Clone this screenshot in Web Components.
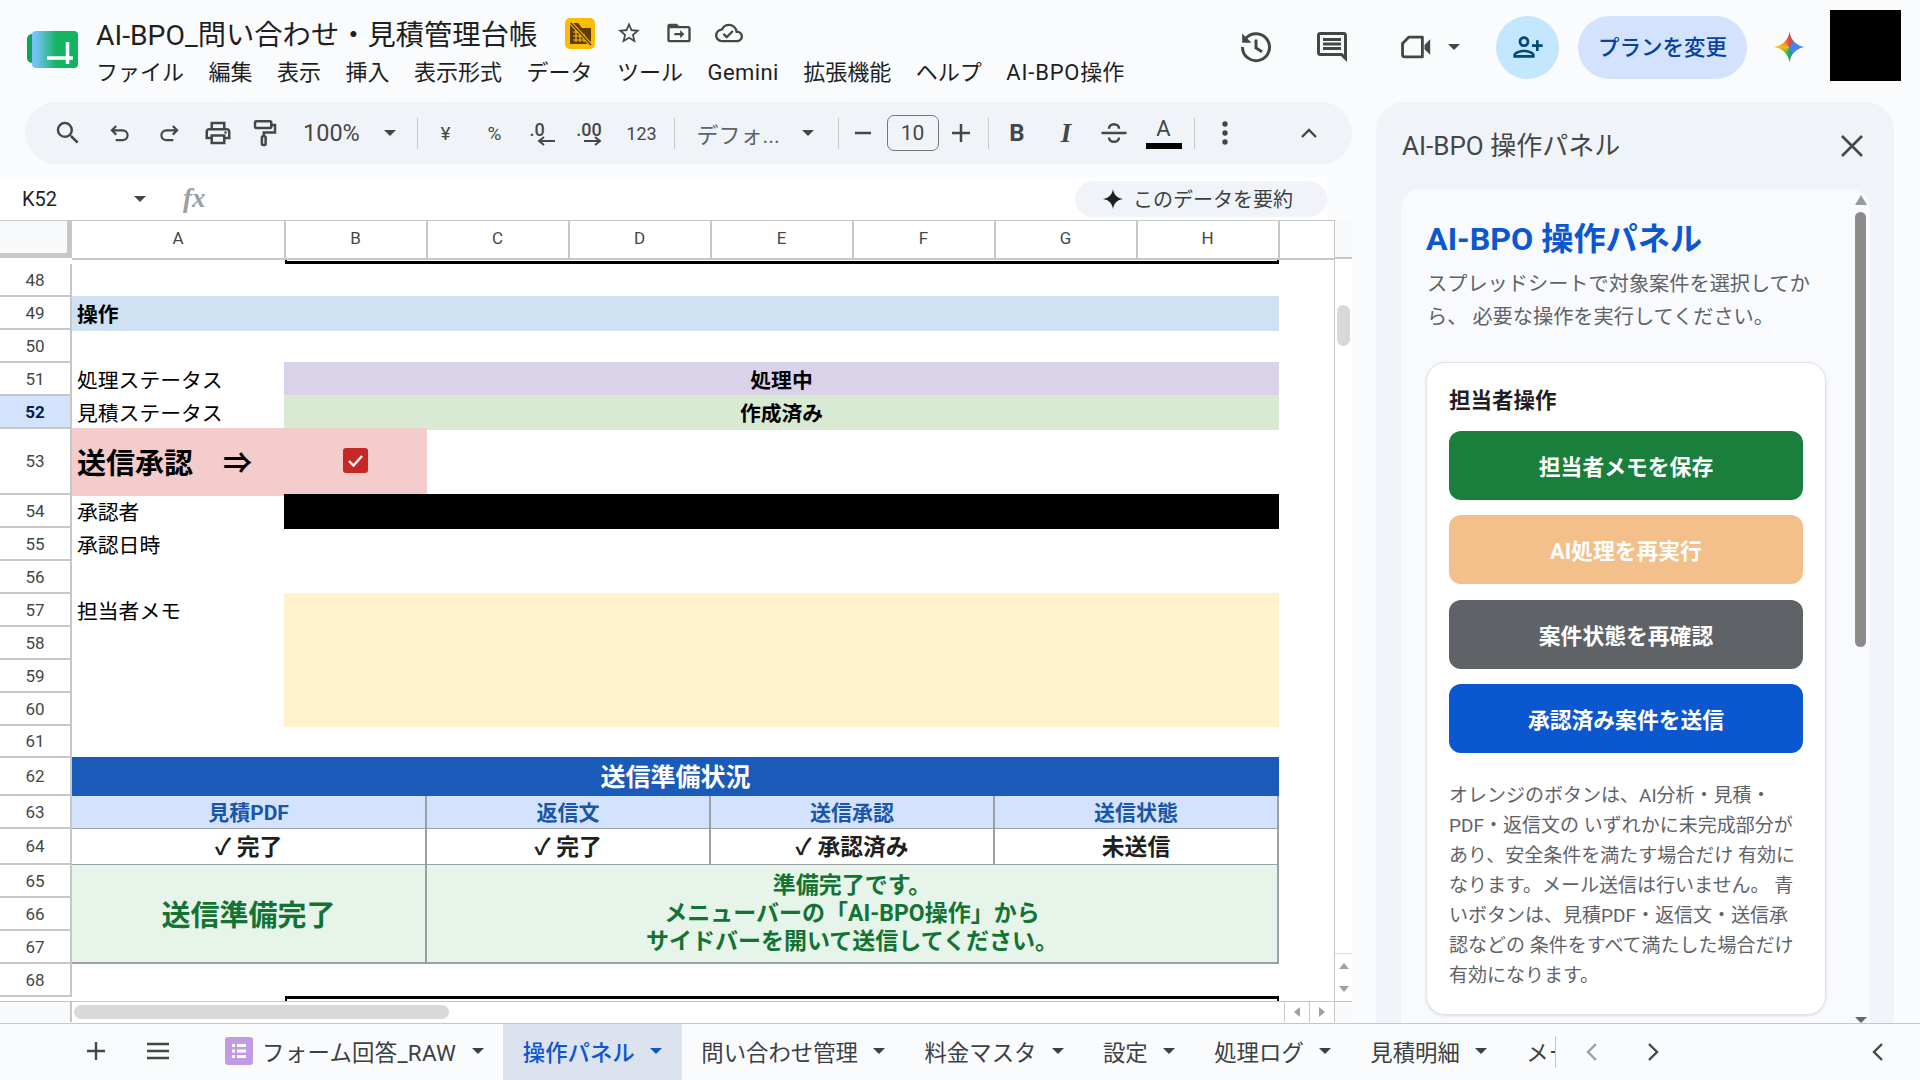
<!DOCTYPE html>
<html lang="ja">
<head>
<meta charset="utf-8">
<title>AI-BPO</title>
<style>
html, body { margin: 0; padding: 0; background: #f9fbfd; overflow: hidden; }
</style>
</head>
<body>
<sheets-app></sheets-app>

<script>
const FONT = 'Roboto, "Noto Sans CJK JP", sans-serif'

customElements.define('drop-arrow', class extends HTMLElement {
  constructor () {
    super()
    this.attachShadow({ mode: 'open' }).innerHTML = `
<style>
:host { display: inline-block; width: 0; height: 0; flex: none;
  border-left: 6px solid transparent; border-right: 6px solid transparent; border-top: 6px solid currentColor; }
</style>`
  }
})

customElements.define('doc-header', class extends HTMLElement {
  constructor () {
    super()
    this.attachShadow({ mode: 'open' }).innerHTML = `
<style>
:host { display: flex; height: 102px; box-sizing: border-box; padding: 0 19px 8px 27px; align-items: center; color: #1f1f1f; font-family: ${FONT}; }
.logo { width: 52px; height: 38px; flex: none; margin-top: 6px; }
.col { margin-left: 17px; margin-top: 10px; }
.row1 { display: flex; height: 37px; align-items: center; }
.title { font-size: 28.300px; white-space: nowrap; width: 442px; margin-top: -1px; }
.badge { width: 30px; height: 31px; margin-left: 27px; background: #fbbc04; border-radius: 5px; display: flex; }
.ic { width: 50px; display: flex; justify-content: center; }
.menu { display: flex; gap: 24.500px; height: 38px; box-sizing: border-box; padding-top: 4px; align-items: baseline; line-height: 34px; font-size: 22px; white-space: nowrap; }
.right { margin-left: auto; display: flex; align-items: center; color: #444746; }
.share { width: 63px; height: 63px; border-radius: 50%; background: #c2e7ff; margin-left: 35px; display: flex; align-items: center; justify-content: center; }
.plan { width: 169px; height: 63px; box-sizing: border-box; padding-bottom: 3px; border-radius: 32px; background: #d3e3fd; margin-left: 19px; color: #0842a0; font-size: 21.500px; font-weight: 500; display: flex; align-items: center; justify-content: center; white-space: nowrap; }
.gem { width: 31px; height: 31px; margin-left: 27px; background: conic-gradient(from 0deg, #ea4335 0deg, #4285f4 50deg, #4285f4 140deg, #1ea362 180deg, #7cb93c 225deg, #fbbc04 275deg, #f28b3c 310deg, #ea4335 360deg); clip-path: path('M15.500 0C16.500 8.400 22.600 14.500 31 15.500C22.600 16.500 16.500 22.600 15.500 31C14.500 22.600 8.400 16.500 0 15.500C8.400 14.500 14.500 8.400 15.500 0Z'); }
.avatar { width: 71px; height: 71px; margin-left: 25px; background: #000; margin-top: -3px; }
</style>
<svg class="logo" viewBox="0 0 52 38">
  <defs><linearGradient id="lg" x1="0" x2="1" y1="0" y2="0"><stop offset="0.08" stop-color="#74c2f5"/><stop offset="0.55" stop-color="#13b45f"/></linearGradient></defs>
  <rect x="0" y="3" width="14" height="29" rx="5" fill="#0aa556"/>
  <rect x="5" y="0" width="46" height="37" rx="4" fill="url(#lg)"/>
  <path d="M20 27H46M40.500 11V33" stroke="#fff" stroke-width="3.500" fill="none"/>
</svg>
<div class="col">
  <div class="row1">
    <div class="title">AI-BPO_問い合わせ・見積管理台帳</div>
    <div class="badge"><svg width="30" height="31" viewBox="0 0 30 31"><path d="M5 5H13L17 10H26V26H5z" fill="#5f3b00"/><path d="M8 14h8M8 18h11M8 22h14M11 11v13M15 13v11M19 16v8" stroke="#fbbc04" stroke-width="1.200"/><path d="M6 5L26 27" stroke="#fbbc04" stroke-width="3.500"/><path d="M6 5L26 27" stroke="#5f3b00" stroke-width="1.600"/></svg></div>
    <div class="ic" style="margin-left:9px"><svg width="26" height="26" viewBox="0 0 24 24" fill="#444746"><path d="M22 9.240l-7.190-.62L12 2 9.190 8.630 2 9.240l5.460 4.730L5.820 21 12 17.270 18.180 21l-1.630-7.030L22 9.240zM12 15.400l-3.760 2.270 1-4.280-3.320-2.880 4.380-.38L12 6.100l1.710 4.040 4.380.38-3.320 2.880 1 4.280L12 15.400z"/></svg></div>
    <div class="ic"><svg width="28" height="28" viewBox="0 0 24 24" fill="#444746"><path d="M20 6h-8l-2-2H4c-1.100 0-2 .9-2 2v12c0 1.100.9 2 2 2h16c1.100 0 2-.9 2-2V8c0-1.100-.9-2-2-2zm0 12H4V8h16v10z"/><path d="M13 9.500l3.500 3.500-3.500 3.500v-2.500H8v-2h5z"/></svg></div>
    <div class="ic"><svg width="28" height="28" viewBox="0 0 24 24" fill="#444746"><path d="M19.350 10.040A7.490 7.490 0 0 0 12 4C9.110 4 6.600 5.640 5.350 8.040A5.994 5.994 0 0 0 0 14c0 3.310 2.690 6 6 6h13c2.760 0 5-2.240 5-5 0-2.640-2.050-4.780-4.650-4.960zM19 18H6c-2.210 0-4-1.790-4-4 0-2.050 1.530-3.760 3.560-3.970l1.070-.11.5-.95A5.469 5.469 0 0 1 12 6c2.620 0 4.880 1.860 5.390 4.430l.3 1.500 1.530.11A2.980 2.980 0 0 1 22 15c0 1.650-1.350 3-3 3zm-9-3.820l-2.090-2.090L6.500 13.500 10 17l6.010-6.010-1.410-1.410z"/></svg></div>
  </div>
  <div class="menu"><span>ファイル</span><span>編集</span><span>表示</span><span>挿入</span><span>表示形式</span><span>データ</span><span>ツール</span><span style="letter-spacing:.4px">Gemini</span><span>拡張機能</span><span>ヘルプ</span><span><span style="letter-spacing:.8px">AI-BPO</span>操作</span></div>
</div>
<div class="right">
  <svg width="36" height="36" viewBox="0 0 24 24" fill="none" stroke="#444746" stroke-width="2" style="margin-right:-2px"><path d="M5.200 6.200A9 9 0 1 1 3 12"/><path d="M2.800 3V9.200H9z" fill="#444746" stroke="none"/><path d="M12 7v5.600l4 2.600"/></svg>
  <svg style="margin-left:42px;margin-right:-2px" width="36" height="36" viewBox="0 0 24 24" fill="#444746"><path d="M21.990 4c0-1.100-.89-2-1.990-2H4c-1.100 0-2 .9-2 2v12c0 1.100.9 2 2 2h14l4 4-.01-18zM20 4v13.170L18.830 16H4V4h16zM6 12h12v2H6zm0-3h12v2H6zm0-3h12v2H6z"/></svg>
  <svg style="margin-left:51px" width="34" height="34" viewBox="0 0 24 24" fill="none" stroke="#444746" stroke-width="2" stroke-linejoin="round"><path d="M7 5H16.500V19H4a1.500 1.500 0 0 1-1.500-1.500V9.500z"/><path d="M18 10.500L22 6.500V17.500L18 13.500z" fill="#444746" stroke="none"/></svg>
  <drop-arrow style="margin-left:15px"></drop-arrow>
  <div class="share" style="margin-left:36px"><svg width="32" height="32" viewBox="0 0 24 24" fill="#004a77" style="transform:scaleX(-1)"><path d="M15 12c2.210 0 4-1.790 4-4s-1.790-4-4-4-4 1.790-4 4 1.790 4 4 4zm0-6c1.100 0 2 .9 2 2s-.9 2-2 2-2-.9-2-2 .9-2 2-2zm0 8c-2.670 0-8 1.340-8 4v2h16v-2c0-2.660-5.330-4-8-4zm-6 4c.22-.72 3.310-2 6-2 2.700 0 5.800 1.290 6 2H9zm-3-3v-3h3v-2H6V7H4v3H1v2h3v3h2z"/></svg></div>
  <div class="plan">プランを変更</div>
  <div class="gem"></div>
  <div class="avatar"></div>
</div>`
  }
})

customElements.define('sheet-toolbar', class extends HTMLElement {
  constructor () {
    super()
    this.attachShadow({ mode: 'open' }).innerHTML = `
<style>
:host { display: flex; align-items: center; height: 62px; width: 1327px; margin-left: 25px; box-sizing: border-box; padding-left: 18px; background: #f0f4f9; border-radius: 31px; color: #444746; font-family: ${FONT}; font-size: 19px; white-space: nowrap; }
.b { width: 49px; height: 40px; display: flex; align-items: center; justify-content: center; flex: none; }
.d { width: 1px; height: 31px; background: #c7c7c7; flex: none; }
.sm { font-size: 18px; }
.st { display: flex; flex-direction: column; align-items: center; line-height: 20px; font-size: 18px; font-weight: 500; }
</style>
<div class="b"><svg width="30" height="30" viewBox="0 0 24 24" fill="#444746"><path d="M15.500 14h-.79l-.28-.27A6.470 6.470 0 0 0 16 9.500 6.500 6.500 0 1 0 9.500 16c1.610 0 3.090-.59 4.230-1.570l.27.28v.79l5 4.990L20.490 19l-4.990-5zm-6 0C7.010 14 5 11.990 5 9.500S7.010 5 9.500 5 14 7.010 14 9.500 11.990 14 9.500 14z"/></svg></div>
<div class="b" style="margin-left:3px"><svg width="26" height="26" viewBox="0 0 24 24" fill="none" stroke="#444746" stroke-width="2"><path d="M8.500 5.500L4.500 9.500L8.500 13.500M4.500 9.500H14.500a4.500 4.500 0 0 1 0 9H8"/></svg></div>
<div class="b"><svg width="26" height="26" viewBox="0 0 24 24" fill="none" stroke="#444746" stroke-width="2" style="transform:scaleX(-1)"><path d="M8.500 5.500L4.500 9.500L8.500 13.500M4.500 9.500H14.500a4.500 4.500 0 0 1 0 9H8"/></svg></div>
<div class="b"><svg width="30" height="30" viewBox="0 0 24 24" fill="#444746"><path d="M19 8h-1V3H6v5H5c-1.660 0-3 1.340-3 3v6h4v4h12v-4h4v-6c0-1.660-1.340-3-3-3zM8 5h8v3H8V5zm8 12v2H8v-4h8v2zm2-2v-2H6v2H4v-4c0-.55.45-1 1-1h14c.55 0 1 .45 1 1v4h-2z"/><circle cx="18" cy="11.500" r="1"/></svg></div>
<div class="b" style="margin-left:-2px"><svg width="30" height="30" viewBox="0 0 24 24" fill="none" stroke="#444746" stroke-width="2"><rect x="4" y="2.500" width="13" height="5.500" rx="1"/><path d="M17 5.500h3v6h-9v3"/><rect x="9.500" y="14.500" width="3" height="7" rx="1"/></svg></div>
<div style="width:87px;padding-left:14px;box-sizing:border-box;font-size:23.500px;flex:none">100%</div>
<div class="b" style="width:28px"><drop-arrow></drop-arrow></div>
<div class="d" style="margin-left:13px"></div>
<div class="b" style="margin-left:3px">¥</div>
<div class="b">%</div>
<div class="b st" style="width:38px;margin-left:-1px"><span>.0</span><svg width="22" height="12" viewBox="0 0 22 12" style="margin:-5px 0 0 18px"><path d="M20 6H5M9 2L4 6l5 4" stroke="#444746" stroke-width="2" fill="none"/></svg></div>
<div class="b st" style="width:60px;margin-left:3px"><span>.00</span><svg width="22" height="12" viewBox="0 0 22 12" style="margin:-5px 0 0 8px"><path d="M2 6H17M13 2l5 4-5 4" stroke="#444746" stroke-width="2" fill="none"/></svg></div>
<div class="b sm" style="margin-left:-2px">123</div>
<div class="d" style="margin-left:8px"></div>
<div style="width:115.500px;padding-left:21.500px;box-sizing:border-box;font-size:22px;flex:none;color:#5f6368">デフォ...</div>
<div class="b" style="width:14px;margin-left:10px"><drop-arrow></drop-arrow></div>
<div class="d" style="margin-left:23px"></div>
<div class="b" style="width:48px"><svg width="18" height="18" viewBox="0 0 18 18"><path d="M1 9H17" stroke="#444746" stroke-width="2.500"/></svg></div>
<div style="width:52px;height:36px;box-sizing:border-box;border:1px solid #747775;border-radius:7px;display:flex;align-items:center;justify-content:center;font-size:21px;flex:none">10</div>
<div class="b" style="width:44px"><svg width="20" height="20" viewBox="0 0 20 20"><path d="M1 10H19M10 1V19" stroke="#444746" stroke-width="2.500"/></svg></div>
<div class="d" style="margin-left:5px"></div>
<div class="b" style="width:57px;font-size:24px;font-weight:700;font-family:Roboto,sans-serif">B</div>
<div class="b" style="width:41px;font-size:27px;font-weight:700;font-style:italic;font-family:'Liberation Serif',serif">I</div>
<div class="b" style="width:55px"><svg width="30" height="30" viewBox="0 0 24 24" fill="none" stroke="#444746" stroke-width="2"><path d="M2 12H22M8 8.500a4 3.500 0 0 1 8 0M8 15.500a4 3.500 0 0 0 8 0"/></svg></div>
<div style="width:44px;flex:none;display:flex;flex-direction:column;align-items:center"><span style="font-size:22px;line-height:25px;margin-top:-2px">A</span><span style="width:36px;height:6px;background:#000;margin-top:2px"></span></div>
<div class="d" style="margin-left:8px"></div>
<div class="b" style="width:60px"><svg width="8" height="26" viewBox="0 0 8 26" fill="#444746"><circle cx="4" cy="4" r="2.700"/><circle cx="4" cy="13" r="2.700"/><circle cx="4" cy="22" r="2.700"/></svg></div>
<div class="b" style="margin-left:26px;width:56px"><svg width="18" height="12" viewBox="0 0 18 12"><path d="M2 10L9 3l7 7" stroke="#444746" stroke-width="2.400" fill="none"/></svg></div>`
  }
})

customElements.define('formula-bar', class extends HTMLElement {
  constructor () {
    super()
    this.attachShadow({ mode: 'open' }).innerHTML = `
<style>
:host { display: flex; align-items: center; height: 43px; width: 1327px; background: #fff; color: #1f1f1f; font-family: ${FONT}; white-space: nowrap; }
.name { font-size: 20px; width: 134px; padding-left: 22px; box-sizing: border-box; }
.fx { margin-left: 37px; font: italic 700 27px "Liberation Serif", serif; color: #9aa0a6; }
.chip { margin-left: auto; width: 252px; height: 36px; border-radius: 18px; background: #f0f4f9; display: flex; align-items: center; box-sizing: border-box; padding-left: 28px; font-size: 20px; color: #3c4043; }
.chip svg { margin-right: 10px; }
</style>
<div class="name">K52</div>
<drop-arrow style="color:#444746"></drop-arrow>
<div class="fx">fx</div>
<div class="chip"><svg width="20" height="20" viewBox="0 0 20 20"><path d="M10 0C10.600 5.500 14.500 9.400 20 10C14.500 10.600 10.600 14.500 10 20C9.400 14.500 5.500 10.600 0 10C5.500 9.400 9.400 5.500 10 0Z" fill="#1f1f1f"/></svg>このデータを要約</div>`
  }
})

customElements.define('sheet-grid', class extends HTMLElement {
  constructor () {
    super()
    const heights = [37, 6, 33, 33, 33, 33, 33, 66, 33, 33, 33, 33, 33, 33, 33, 32, 38, 33, 36, 33, 33, 33, 33, 5]
    // row headers: sheet row n sits on grid track n-45
    let rowHeads = ''
    for (let n = 48; n <= 68; n++) {
      const on = n === 52 ? ' on' : ''
      rowHeads += `<div class="rh${on}" style="grid-area:${n - 45}/1">${n}</div>`
    }
    let colHeads = ''
    'ABCDEFGH'.split('').forEach((c, i) => {
      colHeads += `<div class="ch" style="grid-area:1/${i + 2}">${c}</div>`
    })
    this.attachShadow({ mode: 'open' }).innerHTML = `
<style>
:host { display: flex; flex-direction: column; width: 1352px; height: 802px; background: #fff; font-family: ${FONT}; color: #000; }
.top { display: flex; height: 782px; border-bottom: 1px solid #c7c7c7; box-sizing: border-box; }
.grid { width: 1334px; display: grid; grid-template-columns: 72px 213px repeat(7, 142px) 55px; grid-template-rows: ${heights.map(h => h + 'px').join(' ')}; border-top: 1px solid #c7c7c7; box-sizing: border-box; overflow: hidden; }
.corner { grid-area: 1/1; background: #f8f9fa; border-right: 5px solid #c7c7c7; border-bottom: 5px solid #c7c7c7; box-sizing: border-box; }
.ch { display: flex; align-items: center; justify-content: center; padding-bottom: 3px; font-size: 17px; color: #444746; border-right: 2px solid #c7c7c7; border-bottom: 2px solid #c7c7c7; margin-bottom: -2px; margin-right: -1px; box-sizing: content-box; }
.che { grid-area: 1/10; border-bottom: 2px solid #c7c7c7; margin-bottom: -2px; }
.rh { grid-column: 1; display: flex; align-items: center; justify-content: center; font-size: 17px; color: #444746; border-right: 2px solid #c7c7c7; border-bottom: 2px solid #c7c7c7; box-sizing: border-box; }
.rh.on { background: #d3e3fd; color: #041e49; font-weight: 700; }
.c { display: flex; align-items: center; white-space: nowrap; min-width: 0; font-size: 20.800px; }
.lab { padding: 0 0 1px 5px; grid-column: 2; }
.f { margin: -1px 0 -1px -1px; justify-content: center; font-weight: 700; padding-bottom: 1px; }
.ctr { justify-content: center; }
.bar { grid-column: 3 / 10; border: solid #000; }
.tb { grid-area: 2/3/2/10; border-width: 0 2px 3px 2px; margin-top: 2px; height: 1px; box-sizing: content-box; }
.bb { grid-area: 24/3/24/10; border-width: 3px 2px 0 2px; margin-top: -1px; }
.th { background: #d3e3fd; color: #1a56a8; font-weight: 700; font-size: 21px; padding-bottom: 2px; }
.v { background: #fff; color: #1f1f1f; font-weight: 700; font-size: 22.800px; padding-bottom: 2px; }
.th, .v { justify-content: center; border: solid #9aa0a6; border-width: 0 2px 2px 0; box-sizing: border-box; margin-bottom: -1px; }
.grn { background: #e6f4ea; color: #137333; font-weight: 700; justify-content: center; text-align: center; border: solid #9aa0a6; border-width: 0 2px 2px 0; box-sizing: border-box; }
.vbar { width: 18px; box-sizing: border-box; border-left: 1px solid #c7c7c7; display: flex; flex-direction: column; background: #fff; }
.vhead { height: 37px; background: #f8f9fa; border-bottom: 2px solid #c7c7c7; flex: none; box-sizing: content-box; }
.thumb { width: 13px; height: 41px; margin: 46px 0 0 2px; background: #d9d9d9; border-radius: 7px; flex: none; }
.varr { margin-top: auto; height: 47px; border-top: 1px solid #dadce0; display: flex; flex-direction: column; align-items: center; justify-content: space-around; flex: none; }
.up { width: 0; height: 0; border: 5px solid transparent; border-top: 0; border-bottom: 6px solid #9aa0a6; }
.dn { width: 0; height: 0; border: 5px solid transparent; border-bottom: 0; border-top: 6px solid #9aa0a6; }
.hbar { display: flex; height: 20px; }
.hc { width: 72px; background: #f8f9fa; border-right: 2px solid #c7c7c7; box-sizing: border-box; flex: none; }
.ht { flex: 1; }
.hthumb { width: 375px; height: 14px; margin: 3px 0 0 2px; background: #d9d9d9; border-radius: 7px; }
.ha { width: 25px; border-left: 1px solid #c7c7c7; box-sizing: border-box; display: flex; align-items: center; justify-content: center; flex: none; }
.l { width: 0; height: 0; border: 5px solid transparent; border-left: 0; border-right: 6px solid #9aa0a6; }
.r { width: 0; height: 0; border: 5px solid transparent; border-right: 0; border-left: 6px solid #9aa0a6; }
.hend { width: 18px; background: #f8f9fa; border-left: 1px solid #c7c7c7; box-sizing: border-box; flex: none; }
</style>
<div class="top">
  <div class="grid">
    <div class="corner"></div>
    ${colHeads}
    <div class="che"></div>
    ${rowHeads}
    <div class="bar tb"></div>

    <div class="c" style="grid-area:4/2/4/10;background:#cfe2f3;font-weight:700;padding:0 0 2px 5px;margin:-1px 0">操作</div>

    <div class="c lab" style="grid-row:6">処理ステータス</div>
    <div class="c f" style="grid-area:6/3/6/10;background:#d9d2e9">処理中</div>
    <div class="c lab" style="grid-row:7">見積ステータス</div>
    <div class="c f" style="grid-area:7/3/7/10;background:#d9ead3">作成済み</div>

    <div class="c" style="grid-area:8/2/8/4;background:#f4cccc;margin:-1px 0;padding:0 0 3px 5px;font-weight:700;font-size:29px">
      <span style="width:146px">送信承認</span><span style="width:120px">⇒</span>
      <svg width="25" height="25" viewBox="0 0 25 25"><rect width="25" height="25" rx="3" fill="#c62828"/><path d="M6 13l4.500 4.500L19 8" stroke="#fff" stroke-width="2.400" fill="none"/></svg>
    </div>

    <div class="c lab" style="grid-row:9">承認者</div>
    <div style="grid-area:9/3/9/10;background:#000;margin:-1px 0 -1px -1px"></div>
    <div class="c lab" style="grid-row:10">承認日時</div>

    <div class="c lab" style="grid-row:12">担当者メモ</div>
    <div style="grid-area:12/3/16/10;background:#fff2cc;margin:-1px 0 -1px -1px"></div>

    <div class="c ctr" style="grid-area:17/2/17/10;background:#1a5ab8;color:#fff;font-weight:700;font-size:25px;margin:-1px 0 0;padding-bottom:3px">送信準備状況</div>

    <div class="c th" style="grid-area:18/2/18/4">見積PDF</div>
    <div class="c th" style="grid-area:18/4/18/6">返信文</div>
    <div class="c th" style="grid-area:18/6/18/8">送信承認</div>
    <div class="c th" style="grid-area:18/8/18/10">送信状態</div>

    <div class="c v" style="grid-area:19/2/19/4">✓ 完了</div>
    <div class="c v" style="grid-area:19/4/19/6">✓ 完了</div>
    <div class="c v" style="grid-area:19/6/19/8">✓ 承認済み</div>
    <div class="c v" style="grid-area:19/8/19/10">未送信</div>

    <div class="c grn" style="grid-area:20/2/23/4;font-size:29px;padding-bottom:2px">送信準備完了</div>
    <div class="c grn" style="grid-area:20/4/23/10;font-size:23px;line-height:28px">準備完了です。<br>メニューバーの「AI-BPO操作」から<br>サイドバーを開いて送信してください。</div>

    <div class="bar bb"></div>
  </div>
  <div class="vbar">
    <div class="vhead"></div>
    <div class="thumb"></div>
    <div class="varr"><span class="up"></span><span class="dn"></span></div>
  </div>
</div>
<div class="hbar">
  <div class="hc"></div>
  <div class="ht"><div class="hthumb"></div></div>
  <div class="ha"><span class="l"></span></div>
  <div class="ha"><span class="r"></span></div>
  <div class="hend"></div>
</div>`
  }
})

customElements.define('sheet-tab', class extends HTMLElement {
  constructor () {
    super()
    this.attachShadow({ mode: 'open' }).innerHTML = `
<style>
:host { display: flex; align-items: center; height: 100%; box-sizing: border-box; padding: 0 19.500px 3px; gap: 15.500px; font-size: 22.400px; color: #3c4043; white-space: nowrap; flex: none; }
:host([active]) { background: #dde3ee; color: #0b57d0; font-weight: 500; }
</style>
<slot></slot><drop-arrow></drop-arrow>`
  }
})

customElements.define('sheet-tabs', class extends HTMLElement {
  constructor () {
    super()
    this.attachShadow({ mode: 'open' }).innerHTML = `
<style>
:host { display: flex; align-items: center; height: 57px; box-sizing: border-box; border-top: 1px solid #c7c7c7; background: #f9fbfd; font-family: ${FONT}; color: #444746; }
.add { width: 20px; margin: 0 0 2px 86px; display: flex; }
.all { margin: 0 0 2px 40px; width: 24px; display: flex; }
.list { display: flex; height: 100%; width: 1350px; margin-left: 35px; overflow: hidden; flex: none; }
.form { width: 28px; height: 28px; background: #c29ae6; border-radius: 3px; display: flex; align-items: center; justify-content: center; margin-right: -6px; flex: none; }
.raw { letter-spacing: .3px; }
.sep { width: 1px; height: 32px; background: #c7c7c7; flex: none; }
.a { width: 46px; display: flex; justify-content: center; }
</style>
<div class="add"><svg width="20" height="20" viewBox="0 0 20 20"><path d="M1 10H19M10 1V19" stroke="#444746" stroke-width="2.400"/></svg></div>
<div class="all"><svg width="24" height="20" viewBox="0 0 24 20"><path d="M1 3H23M1 10H23M1 17H23" stroke="#444746" stroke-width="2.400"/></svg></div>
<div class="list">
  <sheet-tab><span class="form"><svg width="20" height="20" viewBox="0 0 20 20" fill="#fff"><rect x="3" y="3" width="3" height="3"/><rect x="8" y="3" width="9" height="3"/><rect x="3" y="8.500" width="3" height="3"/><rect x="8" y="8.500" width="9" height="3"/><rect x="3" y="14" width="3" height="3"/><rect x="8" y="14" width="9" height="3"/></svg></span><span class="raw">フォーム回答_RAW</span></sheet-tab>
  <sheet-tab active>操作パネル</sheet-tab>
  <sheet-tab>問い合わせ管理</sheet-tab>
  <sheet-tab>料金マスタ</sheet-tab>
  <sheet-tab>設定</sheet-tab>
  <sheet-tab>処理ログ</sheet-tab>
  <sheet-tab>見積明細</sheet-tab>
  <sheet-tab>メール送信ログ</sheet-tab>
</div>
<div class="sep"></div>
<div class="a" style="margin-left:13px"><svg width="14" height="22" viewBox="0 0 14 22"><path d="M11 3L3 11l8 8" stroke="#9aa0a6" stroke-width="2.400" fill="none"/></svg></div>
<div class="a" style="margin-left:15px"><svg width="14" height="22" viewBox="0 0 14 22"><path d="M3 3l8 8-8 8" stroke="#444746" stroke-width="2.400" fill="none"/></svg></div>
<div class="a" style="margin-left:179px"><svg width="14" height="22" viewBox="0 0 14 22"><path d="M11 3L3 11l8 8" stroke="#444746" stroke-width="2.400" fill="none"/></svg></div>`
  }
})

customElements.define('action-button', class extends HTMLElement {
  constructor () {
    super()
    this.attachShadow({ mode: 'open' }).innerHTML = `
<style>
:host { display: flex; align-items: center; justify-content: center; height: 69px; border-radius: 12px; background: var(--bg, #0b57d0); color: #fff; font-weight: 700; font-size: 21.800px; white-space: nowrap; }
</style>
<slot></slot>`
  }
})

customElements.define('side-panel', class extends HTMLElement {
  constructor () {
    super()
    this.attachShadow({ mode: 'open' }).innerHTML = `
<style>
:host { display: flex; flex-direction: column; width: 518px; height: 921px; box-sizing: border-box; padding: 0 24px 0 25px; background: #f0f4f9; border-radius: 28px 28px 0 0; font-family: ${FONT}; overflow: hidden; }
.head { height: 87px; flex: none; display: flex; align-items: center; justify-content: space-between; font-size: 26px; color: #444746; padding: 0 6px 0 1px; box-sizing: border-box; }
.head span { margin-bottom: 4px; }
.inner { display: flex; flex: 1; min-height: 0; background: #f8fafd; border-radius: 20px 20px 0 0; overflow: hidden; }
.content { width: 400px; margin-left: 25px; flex: none; }
h1 { margin: 30px 0 0; font-size: 32.200px; line-height: 40px; font-weight: 700; color: #0b57d0; white-space: nowrap; }
.lead { margin: 9px 0 0 1px; font-size: 20.200px; line-height: 33px; color: #5f6368; width: 392px; }
.card { margin-top: 28px; box-sizing: border-box; height: 653px; background: #fff; border: 1px solid #e0e3e7; border-radius: 19px; padding: 23px 22px 0; box-shadow: 0 1px 3px rgba(60, 64, 67, .15); }
h2 { margin: 0 0 14.500px; font-size: 21.500px; line-height: 30px; font-weight: 700; color: #1f1f1f; }
.btns { display: flex; flex-direction: column; gap: 15.500px; }
.note { margin: 27.500px 0 0; font-size: 19px; line-height: 30px; color: #5f6368; white-space: nowrap; }
.sb { width: 11px; margin-left: 29px; display: flex; flex-direction: column; align-items: center; flex: none; }
.u { width: 0; height: 0; margin-top: 6px; border: 6px solid transparent; border-top: 0; border-bottom: 10px solid #9a9a9a; flex: none; }
.t { width: 11px; height: 435px; margin-top: 7px; background: #8b8b8b; border-radius: 6px; flex: none; }
.e { width: 0; height: 0; margin-top: auto; border: 6px solid transparent; border-bottom: 0; border-top: 6px solid #666; flex: none; }
</style>
<div class="head"><span>AI-BPO 操作パネル</span><svg width="24" height="24" viewBox="0 0 24 24"><path d="M2 2L22 22M22 2L2 22" stroke="#444746" stroke-width="2.600"/></svg></div>
<div class="inner">
  <div class="content">
    <h1>AI-BPO 操作パネル</h1>
    <p class="lead">スプレッドシートで対象案件を選択してから、 必要な操作を実行してください。</p>
    <div class="card">
      <h2>担当者操作</h2>
      <div class="btns">
        <action-button style="--bg:#1a7f3c">担当者メモを保存</action-button>
        <action-button style="--bg:#f3c08b">AI処理を再実行</action-button>
        <action-button style="--bg:#5f6368">案件状態を再確認</action-button>
        <action-button style="--bg:#0b57d0">承認済み案件を送信</action-button>
      </div>
      <p class="note">オレンジのボタンは、AI分析・見積・<br>PDF・返信文の いずれかに未完成部分が<br>あり、安全条件を満たす場合だけ 有効に<br>なります。メール送信は行いません。 青<br>いボタンは、見積PDF・返信文・送信承<br>認などの 条件をすべて満たした場合だけ<br>有効になります。</p>
    </div>
  </div>
  <div class="sb"><span class="u"></span><span class="t"></span><span class="e"></span></div>
</div>`
  }
})

customElements.define('sheets-app', class extends HTMLElement {
  constructor () {
    super()
    this.attachShadow({ mode: 'open' }).innerHTML = `
<style>
:host { display: flex; flex-direction: column; width: 1920px; height: 1080px; background: #f9fbfd; overflow: hidden; }
.main { display: flex; height: 921px; flex: none; }
.left { width: 1352px; flex: none; display: flex; flex-direction: column; }
formula-bar { margin-top: 13px; }
side-panel { margin-left: 24px; }
</style>
<doc-header></doc-header>
<div class="main">
  <div class="left">
    <sheet-toolbar></sheet-toolbar>
    <formula-bar></formula-bar>
    <sheet-grid></sheet-grid>
  </div>
  <side-panel></side-panel>
</div>
<sheet-tabs></sheet-tabs>`
  }
})
</script>
</body>
</html>
